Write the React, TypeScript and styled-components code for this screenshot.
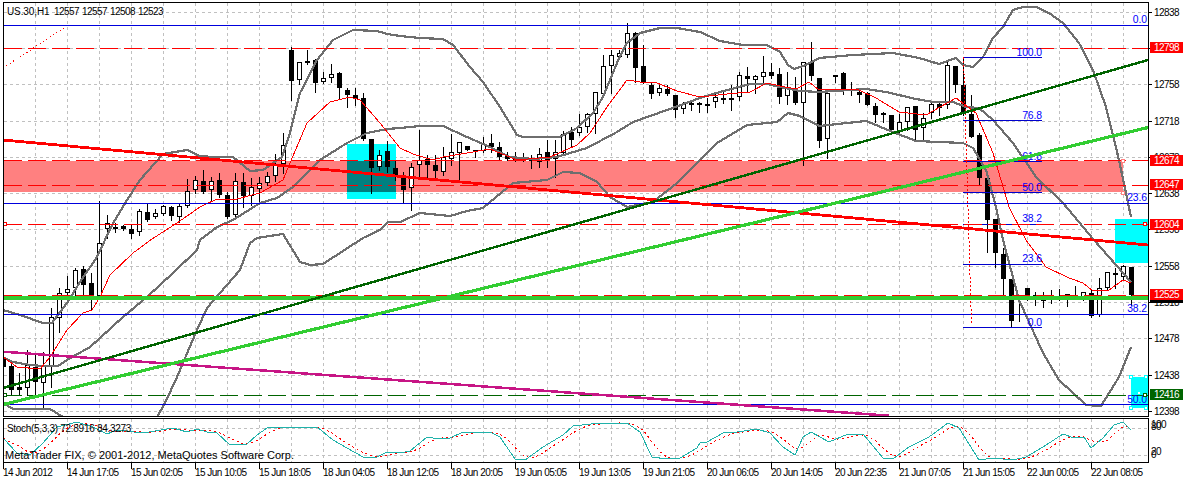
import React from "react";
import styled, { createGlobalStyle } from "styled-components";

const GlobalStyle = createGlobalStyle`
  html, body { margin: 0; padding: 0; background: #fff; overflow: hidden; }
  svg { display: block; }
`;

const FONT = `"Liberation Sans", Arial, sans-serif`;

/* [bodyTop, bodyBottom, high, low, bull] in chart pixels, one bar every 8px */
const B = 0, W = 1;
const candles: number[][] = [
  [357,367,338,373,B],[366,390,360,395,B],[387,390,373,395,B],[365,388,350,395,W],[367,382,355,395,B],[365,383,352,407,W],
  [317,367,308,387,W],[293,318,288,332,W],[289,293,276,297,W],[270,288,268,297,W],[269,285,266,297,B],[283,299,273,310,B],
  [243,296,201,296,W],[223,229,215,238,W],[227,229,223,232,B],[226,229,225,230,B],[229,234,225,238,B],[211,232,209,235,W],
  [212,220,204,221,B],[213,217,209,218,W],[206,214,205,215,W],[207,216,206,220,B],[206,217,203,222,W],[191,206,179,207,W],
  [180,190,176,193,W],[181,192,170,193,B],[181,190,177,200,W],[180,195,173,197,B],[195,217,192,218,B],[181,215,173,216,W],
  [182,196,173,207,B],[187,196,178,205,W],[183,189,177,204,W],[176,183,172,185,W],[165,176,154,181,W],[145,164,133,173,W],
  [50,81,47,100,B],[62,80,62,84,W],[61,62,50,64,B],[60,83,59,92,B],[78,82,72,83,W],[74,78,64,82,W],
  [73,88,72,98,B],[90,95,88,107,B],[95,99,88,105,B],[98,139,93,140,B],[139,168,139,193,B],[155,167,150,170,W],
  [151,167,141,172,B],[168,177,160,180,B],[178,190,172,203,B],[167,188,163,210,W],[160,165,130,177,W],[159,165,155,177,B],
  [165,171,155,177,B],[157,172,147,175,W],[152,159,134,165,W],[142,153,142,182,W],[146,150,146,150,B],[150,152,150,157,B],
  [144,151,137,152,W],[143,147,134,152,B],[147,157,142,160,B],[156,159,152,160,B],[158,159,152,161,B],[158,159,153,161,B],
  [159,161,155,168,B],[154,162,148,167,W],[152,160,140,167,B],[152,159,140,177,W],[134,153,131,153,W],[132,140,127,147,B],
  [127,133,114,135,W],[114,127,113,132,W],[92,114,92,133,W],[66,94,55,95,W],[55,66,50,93,W],[53,57,50,58,W],
  [33,55,23,57,W],[33,68,32,82,B],[66,82,45,83,B],[85,94,83,98,B],[88,93,85,95,W],[89,94,85,95,B],
  [95,110,95,117,B],[104,109,102,113,W],[103,104,102,110,B],[103,104,102,112,B],[104,105,98,112,B],[97,102,93,107,W],
  [98,99,90,103,B],[98,99,85,110,B],[75,97,72,100,W],[76,79,67,92,B],[76,80,75,93,W],[72,77,56,83,W],
  [72,76,63,78,B],[74,97,68,103,B],[87,96,72,104,W],[88,103,77,104,B],[62,103,62,165,W],[62,76,42,80,B],
  [78,141,78,147,B],[93,139,92,158,W],[75,76,75,82,B],[73,89,72,94,B],[89,90,82,95,B],[92,95,88,102,B],
  [93,105,92,105,B],[106,115,103,122,B],[113,114,112,122,B],[115,130,115,132,B],[122,132,114,133,W],[107,122,107,130,W],
  [106,130,106,140,B],[118,128,113,140,W],[104,113,103,118,W],[104,108,103,115,B],[65,105,62,108,W],[66,85,66,92,B],
  [85,113,57,115,B],[114,137,95,137,B],[135,178,133,185,B],[178,220,178,252,B],[219,253,219,267,B],[254,279,248,295,B],
  [279,321,279,327,B],[295,299,297,321,W],[288,296,288,300,B],[295,296,292,305,B],[299,300,292,307,B],[295,296,290,303,B],
  [296,297,289,300,B],[294,297,294,306,W],[295,296,286,298,B],[292,297,292,300,W],[293,316,290,317,B],[288,315,278,316,W],
  [272,288,272,290,W],[273,275,268,288,B],[266,277,265,280,W],[267,295,267,305,B],
];

const pts = (a: number[][]) => a.map((p) => p.join(",")).join(" ");

const bandMiddle = [[3,357],[13,362],[30,365],[43,366],[58,366],[67,360],[90,347],[100,338],[123,317],[147,297],[173,273],[197,250],[200,240],[217,227],[233,220],[260,203],[277,198],[293,187],[320,160],[347,143],[367,133],[387,129],[400,128],[420,126],[443,126],[467,137],[490,147],[510,157],[533,159],[557,157],[587,148],[617,132],[633,122],[667,110],[700,98],[720,92],[750,84],[767,84],[780,87],[800,91],[819,92],[866,89],[886,92],[916,99],[933,102],[953,102],[966,107],[979,108],[993,120],[1013,143],[1036,177],[1063,203],[1094,240],[1131,282]];
const bandUpper = [[3,310],[20,315],[43,323],[52,323],[67,303],[80,282],[97,257],[105,240],[115,220],[127,200],[140,180],[163,154],[187,150],[200,156],[213,157],[233,157],[250,171],[263,170],[282,157],[290,133],[300,93],[317,60],[333,40],[353,30],[377,31],[387,34],[400,36],[420,38],[443,39],[453,45],[470,67],[483,82],[500,107],[517,135],[523,137],[560,137],[577,128],[593,113],[603,97],[617,63],[627,43],[640,33],[660,28],[677,28],[700,32],[720,41],[743,45],[767,45],[780,52],[788,65],[794,69],[806,65],[819,58],[853,55],[893,53],[919,58],[939,64],[956,58],[963,65],[973,67],[983,57],[993,38],[1003,27],[1013,10],[1023,7],[1036,7],[1049,13],[1063,23],[1079,43],[1093,70],[1106,107],[1119,160],[1131,217]];
const bandLower = [[3,403],[13,409],[50,409],[63,417],[157,417],[165,403],[177,377],[197,330],[207,308],[220,293],[240,270],[250,243],[257,238],[283,234],[300,262],[310,265],[323,264],[363,238],[380,230],[388,222],[400,222],[420,213],[450,216],[467,211],[483,208],[513,183],[547,180],[563,172],[580,173],[597,182],[610,197],[627,207],[653,202],[677,183],[700,160],[717,143],[747,125],[777,122],[788,113],[800,116],[819,126],[866,121],[893,132],[916,141],[963,143],[973,148],[986,170],[996,207],[1003,240],[1019,300],[1043,353],[1059,380],[1086,405],[1101,406],[1119,377],[1131,347]];
const movingAverage = [[3,357],[17,367],[40,369],[50,357],[67,330],[83,313],[92,310],[100,297],[110,275],[133,253],[152,239],[177,223],[200,207],[217,199],[233,200],[260,193],[283,180],[290,163],[307,123],[330,102],[350,97],[360,100],[380,123],[400,148],[413,154],[433,160],[443,157],[467,153],[490,149],[517,160],[550,157],[577,145],[590,133],[607,107],[627,80],[640,82],[657,83],[677,91],[700,97],[727,94],[750,92],[767,83],[780,86],[796,89],[809,82],[819,90],[836,89],[859,90],[876,98],[899,112],[926,115],[956,98],[976,113],[993,153],[1009,207],[1026,240],[1046,267],[1069,278],[1083,283],[1093,291],[1109,290],[1123,280],[1131,283]];
const stochMain = [[3,438],[17,453],[30,455],[43,443],[57,427],[77,422],[93,427],[107,434],[117,430],[143,433],[173,428],[187,432],[197,429],[207,432],[217,433],[230,445],[247,444],[257,435],[267,428],[287,427],[317,427],[333,440],[347,448],[363,457],[377,457],[387,452],[400,453],[410,451],[427,437],[433,438],[450,438],[463,432],[490,432],[500,437],[515,459],[525,460],[543,447],[563,435],[573,426],[600,423],[627,423],[640,432],[652,457],[667,459],[680,458],[697,448],[700,443],[707,442],[723,433],[737,432],[757,429],[770,433],[783,447],[795,455],[803,437],[811,432],[829,442],[848,434],[863,434],[883,458],[894,458],[909,447],[929,437],[948,423],[959,428],[979,460],[993,458],[1013,460],[1026,457],[1043,447],[1063,434],[1074,438],[1084,437],[1091,448],[1103,438],[1114,425],[1123,422],[1131,430]];

const sampleAt = (line: number[][], x: number) => {
  for (let i = 1; i < line.length; i++) {
    if (x <= line[i][0]) {
      const [x0, y0] = line[i - 1];
      const [x1, y1] = line[i];
      return y0 + ((y1 - y0) * (x - x0)) / (x1 - x0);
    }
  }
  return line[line.length - 1][1];
};
const barX = candles.map((_, n) => 3.5 + 8 * n);
const stochSignal = barX.map((x, n) => {
  const from = Math.max(0, n - 2);
  let sum = 0;
  for (let k = from; k <= n; k++) sum += sampleAt(stochMain, barX[k]);
  return [x, +(sum / (n - from + 1)).toFixed(1)];
});

const gridX = Array.from({ length: 35 }, (_, k) => 35.5 + 32 * k);
const gridY = [12.5, 48.5, 84.5, 121.5, 157.5, 193.5, 229.5, 266.5, 302.5, 338.5, 375.5, 411.5];

const blueLevels = [25.5, 203.5, 314.5, 404.5];
const redLevels = [48.5, 160.5, 185.5, 224.5, 295.5];

const fibA = [
  { y: 25, t: "0.0", ty: 23 },
  { y: 203, t: "23.6", ty: 201 },
  { y: 314, t: "38.2", ty: 312 },
  { y: 404, t: "50.0", ty: 403 },
];
const fibB = [
  { y: 57.5, t: "100.0", ty: 56 },
  { y: 120.5, t: "76.8", ty: 119 },
  { y: 161.5, t: "61.8", ty: 160 },
  { y: 192.5, t: "50.0", ty: 191 },
  { y: 224.5, t: "38.2", ty: 222 },
  { y: 264.5, t: "23.6", ty: 262 },
  { y: 327.5, t: "0.0", ty: 326 },
];

const timeLabels = ["14 Jun 2012","14 Jun 17:05","15 Jun 02:05","15 Jun 10:05","15 Jun 18:05","18 Jun 04:05","18 Jun 12:05","18 Jun 20:05","19 Jun 05:05","19 Jun 13:05","19 Jun 21:05","20 Jun 06:05","20 Jun 14:05","20 Jun 22:35","21 Jun 07:05","21 Jun 15:05","22 Jun 00:05","22 Jun 08:05"];
const priceLabels = [[12838,12],[12798,48],[12758,84],[12718,121],[12678,157],[12638,193],[12598,229],[12558,266],[12518,302],[12478,338],[12438,375],[12398,411]];
const tags: [string, number, string][] = [
  ["12798", 42, "#ff0000"],
  ["12674", 155, "#ff0000"],
  ["12647", 179, "#ff0000"],
  ["12604", 219, "#ff0000"],
  ["12525", 289, "#ff0000"],
  ["12416", 389, "#006400"],
];

const Workspace = styled.div`
  width: 1186px;
  height: 480px;
  padding: 2px 0 0 3px;
  box-sizing: border-box;
  background: #fff;
  font-family: ${FONT};
  overflow: hidden;
`;
const ChartRow = styled.div`
  display: flex;
  align-items: flex-start;
`;
const Panes = styled.div`
  display: flex;
  flex-direction: column;
  gap: 1px;
  width: 1146px;
`;
const Pane = styled.div<{ $h: number }>`
  height: ${(p) => p.$h}px;
  border: 1px solid #000;
  box-sizing: border-box;
  overflow: hidden;
`;
const Plot = styled.svg`
  shape-rendering: crispEdges;
`;
const GridLine = styled.line`
  stroke: #c0c0c0;
  stroke-width: 1;
  stroke-dasharray: 3 3;
`;
const Zone = styled.rect<{ $c: string }>`
  fill: ${(p) => p.$c};
`;
const Wick = styled.line`
  stroke: #000;
  stroke-width: 1;
`;
const Body = styled.rect<{ $bull: boolean }>`
  fill: ${(p) => (p.$bull ? "#fff" : "#000")};
  stroke: #000;
  stroke-width: 1;
`;
const Curve = styled.polyline<{ $c: string; $w: number; $dash?: string }>`
  fill: none;
  stroke: ${(p) => p.$c};
  stroke-width: ${(p) => p.$w}px;
  stroke-dasharray: ${(p) => p.$dash || "none"};
`;
const Level = styled.line<{ $c: string; $w?: number; $dash?: boolean }>`
  stroke: ${(p) => p.$c};
  stroke-width: ${(p) => p.$w || 1}px;
  stroke-dasharray: ${(p) => (p.$dash ? "18 6" : "none")};
`;
const Handle = styled.rect<{ $c: string }>`
  fill: #fff;
  stroke: ${(p) => p.$c};
  stroke-width: 1;
`;
const FibText = styled.text`
  font: 10.4px ${FONT};
  letter-spacing: -0.1px;
  fill: #0000ff;
  text-anchor: end;
`;
const PlotText = styled.text<{ $size: number; $track?: number }>`
  font: ${(p) => p.$size}px ${FONT};
  letter-spacing: ${(p) => p.$track || 0}px;
  fill: #000;
  white-space: pre;
`;
const PriceAxis = styled.div`
  position: relative;
  width: 37px;
  height: 461px;
  font-size: 10px;
  letter-spacing: -0.55px;
  line-height: 11px;
`;
const PriceTick = styled.div`
  position: absolute;
  left: 0;
  width: 3px;
  height: 1px;
  background: #000;
`;
const PriceText = styled.div`
  position: absolute;
  left: 5px;
  height: 11px;
  color: #000;
  background: #fff;
`;
const PaneScaleText = styled.div`
  position: absolute;
  left: 2px;
  height: 11px;
  color: #000;
`;
const PriceTag = styled.div<{ $bg: string }>`
  position: absolute;
  left: 1px;
  width: 33px;
  height: 11px;
  padding-left: 4px;
  box-sizing: border-box;
  background: ${(p) => p.$bg};
  color: #fff;
`;
const StripLip = styled.div`
  position: absolute;
  left: 1px;
  top: 298px;
  width: 33px;
  height: 3px;
  background: #000;
`;
const TimeAxis = styled.div`
  display: flex;
`;
const TimeCell = styled.div`
  width: 64px;
  flex: none;
  display: flex;
  flex-direction: column;
  white-space: nowrap;
  font-size: 10px;
  letter-spacing: -0.52px;
  line-height: 11px;
  color: #000;
`;
const TimeTick = styled.div`
  width: 1px;
  height: 6px;
  background: #000;
  margin-bottom: -2px;
`;

export default function App() {
  return (
    <Workspace>
      <GlobalStyle />
      <ChartRow>
        <Panes>
          <Pane $h={415}>
            <Plot width="1144" height="413" viewBox="4 3 1144 413">
              {gridX.map((x) => <GridLine key={x} x1={x} x2={x} y1={3} y2={416} />)}
              {gridY.map((y) => <GridLine key={y} x1={4} x2={1148} y1={y} y2={y} />)}

              <Zone $c="#ff8080" x={4} y={161} width={1119} height={31} />
              <Zone $c="#00ffff" x={347} y={144} width={49} height={55} />
              <Zone $c="#008080" x={347} y={161} width={49} height={31} />
              <Zone $c="#00ffff" x={1115} y={219} width={33} height={44} />
              <Zone $c="#00ffff" x={1131} y={377} width={17} height={31} />

              {candles.map(([t, b, h, l, bull], n) => (
                <g key={n}>
                  <Wick x1={barX[n]} x2={barX[n]} y1={h} y2={l + 1} />
                  <Body $bull={!!bull} x={barX[n] - 2} y={t + 0.5} width={4} height={Math.max(b - t - 1, 1)} />
                </g>
              ))}

              <Curve $c="#6e6e6e" $w={2.2} points={pts(bandUpper)} />
              <Curve $c="#6e6e6e" $w={2.2} points={pts(bandMiddle)} />
              <Curve $c="#6e6e6e" $w={2.2} points={pts(bandLower)} />
              <Curve $c="#ff0000" $w={1} points={pts(movingAverage)} />

              {blueLevels.map((y) => <Level key={y} $c="#0000dd" x1={4} x2={1148} y1={y} y2={y} />)}
              {fibB.map((f) => <Level key={f.y} $c="#0000cd" x1={963} x2={1042} y1={f.y} y2={f.y} />)}
              {redLevels.map((y) => <Level key={y} $c="#ff0000" $dash x1={4} x2={1148} y1={y} y2={y} />)}
              <Level $c="#006400" $dash x1={4} x2={1148} y1={395.5} y2={395.5} />
              <Curve $c="#ff0000" $w={1} $dash="1 3" points="3,68 67,26" />
              <Curve $c="#ff0000" $w={1} $dash="2 2" points="963.5,57 971.5,325" />

              {fibA.map((f) => <FibText key={f.y} x={1147} y={f.ty}>{f.t}</FibText>)}
              {fibB.map((f) => <FibText key={f.y} x={1042} y={f.ty}>{f.t}</FibText>)}

              <Level $c="#32cd32" $w={4} x1={4} x2={1148} y1={297.5} y2={297.5} />
              <Level $c="#ff0000" $w={2.8} x1={3} x2={1148} y1={140} y2={245} />
              <Level $c="#c71585" $w={2.5} x1={3} x2={889} y1={351.7} y2={415.7} />
              <Level $c="#006400" $w={2.4} x1={3} x2={1148} y1={388} y2={60} />
              <Level $c="#32cd32" $w={3.2} x1={3} x2={1148} y1={404.5} y2={127.5} />

              <Handle $c="#ff0000" x={3.5} y={222.5} width={3} height={3} />
              <Handle $c="#ff0000" x={1143.5} y={222.5} width={3} height={3} />
              <Handle $c="#006400" x={3.5} y={393.5} width={3} height={3} />
              <Handle $c="#006400" x={1143.5} y={393.5} width={3} height={3} />
              <Handle $c="#ff8080" x={1121.5} y={159.5} width={3} height={3} />
              <Handle $c="#ff8080" x={1121.5} y={191.5} width={3} height={3} />
              <Handle $c="#00ffff" x={1129.5} y={375.5} width={3} height={3} />
              <Handle $c="#00ffff" x={1144.5} y={375.5} width={3} height={3} />
              <Handle $c="#00ffff" x={1129.5} y={406.5} width={3} height={3} />
              <Handle $c="#00ffff" x={1144.5} y={406.5} width={3} height={3} />
              <Handle $c="#00ffff" x={1137.5} y={391.5} width={3} height={3} />

              <PlotText $size={10} $track={-0.1} x={7} y={15}>US.30,H1</PlotText>
              <PlotText $size={10} $track={-0.55} x={54} y={15}>12557</PlotText>
              <PlotText $size={10} $track={-0.55} x={82} y={15}>12557</PlotText>
              <PlotText $size={10} $track={-0.55} x={110} y={15}>12508</PlotText>
              <PlotText $size={10} $track={-0.55} x={138} y={15}>12523</PlotText>
            </Plot>
          </Pane>
          <Pane $h={45}>
            <Plot width="1144" height="43" viewBox="4 419 1144 43">
              {gridX.map((x) => <GridLine key={x} x1={x} x2={x} y1={419} y2={462} />)}
              <GridLine x1={4} x2={1148} y1={428.5} y2={428.5} />
              <GridLine x1={4} x2={1148} y1={455.5} y2={455.5} />
              <Curve $c="#ff0000" $w={1} $dash="2 3" points={pts(stochSignal)} />
              <Curve $c="#20b2aa" $w={1} points={pts(stochMain)} />
              <PlotText $size={10} $track={-0.3} x={7} y={432}>Stoch(5,3,3) 72.8916 84.3273</PlotText>
              <PlotText $size={11} x={5} y={459}>MetaTrader FIX, © 2001-2012, MetaQuotes Software Corp.</PlotText>
            </Plot>
          </Pane>
        </Panes>
        <PriceAxis>
          {priceLabels.map(([p, y]) => (
            <React.Fragment key={p}>
              <PriceTick style={{ top: y - 2 }} />
              <PriceText style={{ top: y - 7 }}>{p}</PriceText>
            </React.Fragment>
          ))}
          <StripLip />
          {tags.map(([t, y, c]) => (
            <PriceTag key={t} $bg={c} style={{ top: y - 2 }}>{t}</PriceTag>
          ))}
          <PaneScaleText style={{ top: 419 }}>80</PaneScaleText>
          <PaneScaleText style={{ top: 417 }}>100</PaneScaleText>
          <PaneScaleText style={{ top: 444 }}>20</PaneScaleText>
          <PaneScaleText style={{ top: 447 }}>0</PaneScaleText>
        </PriceAxis>
      </ChartRow>
      <TimeAxis>
        {timeLabels.map((t) => (
          <TimeCell key={t}>
            <TimeTick />
            {t}
          </TimeCell>
        ))}
      </TimeAxis>
    </Workspace>
  );
}
